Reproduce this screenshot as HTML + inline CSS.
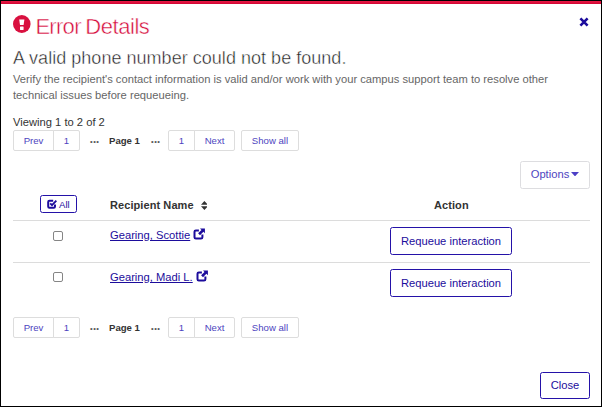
<!DOCTYPE html>
<html><head><meta charset="utf-8">
<style>
*{box-sizing:border-box}
html,body{margin:0;padding:0}
body{width:602px;height:407px;overflow:hidden;background:#fff;font-family:"Liberation Sans",Arial,sans-serif;color:#333;position:relative}
#frame{position:absolute;left:0;top:0;width:602px;height:407px;border:1px solid #000}
#redbar{position:absolute;left:1px;top:1px;width:600px;height:3px;background:linear-gradient(#ea1945,#cf0532)}
h1{position:absolute;left:35.4px;top:14px;margin:0;font-weight:400;font-size:22px;line-height:26px;color:#d50a3a;letter-spacing:-0.7px;word-spacing:-0.9px;white-space:nowrap;-webkit-text-stroke:0.45px #fff}
#eicon{position:absolute;left:13px;top:15px;width:17.6px;height:18px}
#closex{position:absolute;left:579px;top:17.1px;width:10px;height:10px}
h2{position:absolute;left:13px;top:45.5px;margin:0;font-weight:400;font-size:18px;line-height:24px;color:#1c1c1c;white-space:nowrap;letter-spacing:0.03px;-webkit-text-stroke:0.42px #fff}
p.desc{position:absolute;left:13px;top:70.5px;margin:0;font-size:11.2px;line-height:16px;color:#666;width:570px}
.viewing{position:absolute;left:13px;top:116px;font-size:11.2px;line-height:13px;color:#333;white-space:nowrap}
.pager{position:absolute;left:13px;height:21px;font-size:9.6px;white-space:nowrap}
.pager .b{position:absolute;top:0;height:21px;border:1px solid #dddddd;background:#fff;color:#4d44c0;text-align:center;line-height:19px}
.pager .t{position:absolute;top:0.4px;line-height:21px;color:#333}
.btn{position:absolute;border:1px solid #2412a8;border-radius:2.5px;background:#fff;color:#1c0c9c;font-size:11.2px;text-align:center}
.hr{position:absolute;left:13px;width:577px;height:1px;background:#dcdcdc}
.th{position:absolute;top:199px;font-weight:700;font-size:11px;line-height:13px;color:#333;white-space:nowrap;letter-spacing:0.08px}
.cb{position:absolute;left:53px;width:10px;height:10px;border:1px solid #858585;border-radius:2px;background:#fff}
a.nm{position:absolute;left:110px;font-size:11.2px;line-height:13px;color:#1c0c9c;text-decoration:underline;white-space:nowrap}
.ext{position:absolute;width:12px;height:12px}
</style></head><body>
<div id="frame"></div><div id="redbar"></div>
<svg id="eicon" viewBox="0 0 17.6 18"><ellipse cx="8.8" cy="9" rx="8.8" ry="9" fill="#d9103f"/><path d="M6.2 4.4H11.4L10.6 10H7Z" fill="#fff"/><rect x="7" y="11.5" width="3.6" height="3.5" rx="0.4" fill="#fff"/></svg>
<h1>Error <span style="letter-spacing:-0.45px">Details</span></h1>
<svg id="closex" viewBox="0 0 10 10"><path d="M1.4 1.4 L8.6 8.6 M8.6 1.4 L1.4 8.6" stroke="#1c0c9c" stroke-width="2.6" stroke-linecap="butt"/></svg>
<h2>A valid phone number could not be found.</h2>
<p class="desc">Verify the recipient's contact information is valid and/or work with your campus support team to resolve other technical issues before requeueing.</p>
<div class="viewing">Viewing 1 to 2 of 2</div>

<div class="pager" style="top:130px">
 <div class="b" style="left:0;width:41px;border-radius:2px 0 0 2px">Prev</div>
 <div class="b" style="left:40px;width:27px;border-radius:0 2px 2px 0">1</div>
 <div class="t" style="left:77px;font-size:7.6px;letter-spacing:0.5px;top:0.8px;color:#5a5a5a">•••</div>
 <div class="t" style="left:96px;font-weight:700">Page 1</div>
 <div class="t" style="left:138px;font-size:7.6px;letter-spacing:0.5px;top:0.8px;color:#5a5a5a">•••</div>
 <div class="b" style="left:155px;width:27px;border-radius:2px 0 0 2px">1</div>
 <div class="b" style="left:181px;width:41px;border-radius:0 2px 2px 0">Next</div>
 <div class="b" style="left:228px;width:58px;border-radius:2px">Show all</div>
</div>

<div class="btn" id="options" style="left:520px;top:161px;width:70px;height:28px;line-height:24.4px;border-color:#dddde0;color:#4d44c0;text-align:left;padding-left:9.7px">Options<svg style="position:absolute;left:50.4px;top:10px" width="8" height="4.4" viewBox="0 0 8 4.4"><path d="M0 0H8L4 4.4Z" fill="#4d3fc6"/></svg></div>

<div class="btn" id="allbtn" style="left:40px;top:195px;width:37px;height:18px;line-height:17.6px;font-size:9.6px;text-align:left;padding-left:18px"><svg style="position:absolute;left:5.6px;top:3.2px" width="10.4" height="10" viewBox="0 0 10.4 10"><path d="M8 5.6V7.6a1.2 1.2 0 0 1-1.2 1.2H2.4a1.2 1.2 0 0 1-1.2-1.2V3a1.2 1.2 0 0 1 1.2-1.2h3.8" fill="none" stroke="#1c0c9c" stroke-width="2"/><path d="M3.2 4.4L5 6.2L9.4 1.6" fill="none" stroke="#1c0c9c" stroke-width="1.9"/></svg>All</div>
<div class="th" style="left:110px">Recipient Name</div>
<svg style="position:absolute;left:200.6px;top:200.6px" width="6.8" height="9" viewBox="0 0 6.8 9"><path d="M0 3.7H6.8L3.4 0Z M0 5.3H6.8L3.4 9Z" fill="#333"/></svg>
<div class="th" style="left:434px">Action</div>

<div class="hr" style="top:220px"></div>
<div class="cb" style="top:231px"></div>
<a class="nm" style="top:229px">Gearing, Scottie</a>
<svg class="ext" style="left:193.2px;top:228px" viewBox="0 0 12 12"><path d="M9.4 6.6V9.2a1.4 1.4 0 0 1-1.4 1.4H2.9a1.4 1.4 0 0 1-1.4-1.4V3.8a1.4 1.4 0 0 1 1.4-1.4h3" fill="none" stroke="#1c0c9c" stroke-width="2"/><path d="M7 0.4H11.9V5.3L10.4 3.8L7 7.2L5.1 5.3L8.5 1.9Z" fill="#1c0c9c"/></svg>
<div class="btn" style="left:390px;top:227px;width:122px;height:28px;line-height:26px">Requeue interaction</div>

<div class="hr" style="top:262px"></div>
<div class="cb" style="top:272px"></div>
<a class="nm" style="top:271px">Gearing, Madi L.</a>
<svg class="ext" style="left:196.2px;top:270.4px" viewBox="0 0 12 12"><path d="M9.4 6.6V9.2a1.4 1.4 0 0 1-1.4 1.4H2.9a1.4 1.4 0 0 1-1.4-1.4V3.8a1.4 1.4 0 0 1 1.4-1.4h3" fill="none" stroke="#1c0c9c" stroke-width="2"/><path d="M7 0.4H11.9V5.3L10.4 3.8L7 7.2L5.1 5.3L8.5 1.9Z" fill="#1c0c9c"/></svg>
<div class="btn" style="left:390px;top:269px;width:122px;height:28px;line-height:26px">Requeue interaction</div>

<div class="pager" style="top:317px">
 <div class="b" style="left:0;width:41px;border-radius:2px 0 0 2px">Prev</div>
 <div class="b" style="left:40px;width:27px;border-radius:0 2px 2px 0">1</div>
 <div class="t" style="left:77px;font-size:7.6px;letter-spacing:0.5px;top:0.8px;color:#5a5a5a">•••</div>
 <div class="t" style="left:96px;font-weight:700">Page 1</div>
 <div class="t" style="left:138px;font-size:7.6px;letter-spacing:0.5px;top:0.8px;color:#5a5a5a">•••</div>
 <div class="b" style="left:155px;width:27px;border-radius:2px 0 0 2px">1</div>
 <div class="b" style="left:181px;width:41px;border-radius:0 2px 2px 0">Next</div>
 <div class="b" style="left:228px;width:58px;border-radius:2px">Show all</div>
</div>

<div class="btn" id="close" style="left:540px;top:372px;width:50px;height:27px;line-height:25px">Close</div>
</body></html>
